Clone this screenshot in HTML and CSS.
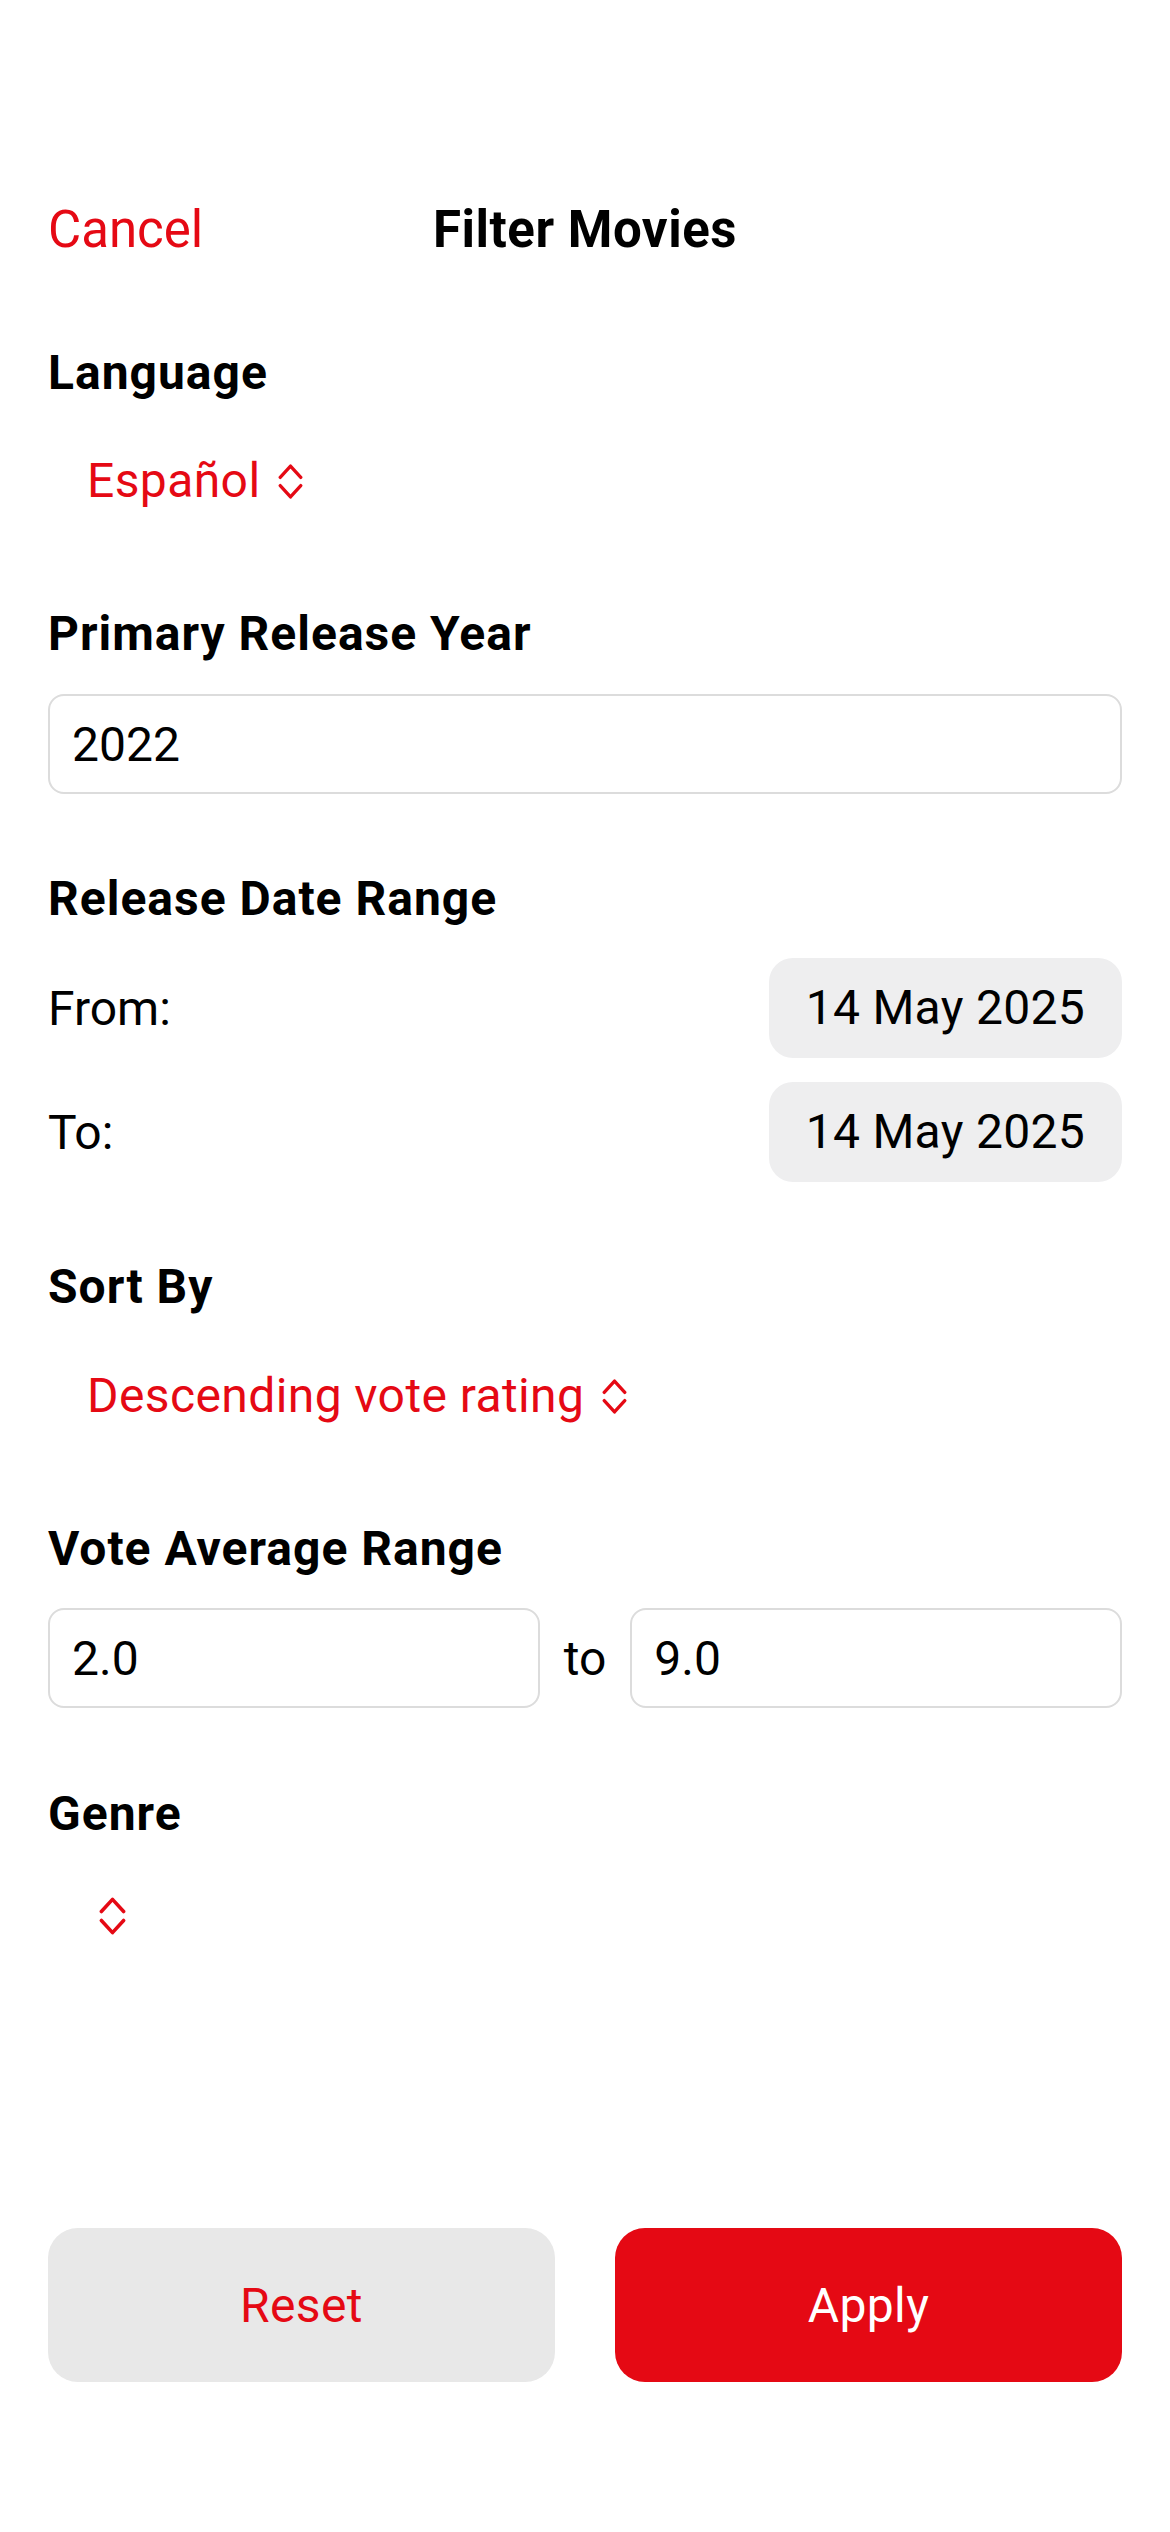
FILE: index.html
```html
<!DOCTYPE html>
<html lang="en">
<head>
<meta charset="utf-8">
<title>Filter Movies</title>
<link rel="stylesheet" href="styles.css">
</head>
<body>
<div class="screen">
  <header class="nav">
    <span class="nav-cancel">Cancel</span>
    <span class="nav-title">Filter Movies</span>
    <span class="nav-spacer"></span>
  </header>

  <section class="section section-language">
    <div class="section-label">Language</div>
    <div class="picker picker-language">
      <span class="picker-text">Español</span>
      <svg class="chevrons" viewBox="0 0 24 36" aria-hidden="true"><polyline points="2,14 12,3 22,14"/><polyline points="2,22 12,33 22,22"/></svg>
    </div>
  </section>

  <section class="section section-year">
    <div class="section-label">Primary Release Year</div>
    <input class="field field-year" type="text" value="2022">
  </section>

  <section class="section section-dates">
    <div class="section-label">Release Date Range</div>
    <div class="date-row date-row-from">
      <span class="date-label">From:</span>
      <span class="date-pill">14 May 2025</span>
    </div>
    <div class="date-row date-row-to">
      <span class="date-label">To:</span>
      <span class="date-pill">14 May 2025</span>
    </div>
  </section>

  <section class="section section-sort">
    <div class="section-label">Sort By</div>
    <div class="picker picker-sort">
      <span class="picker-text">Descending vote rating</span>
      <svg class="chevrons" viewBox="0 0 24 36" aria-hidden="true"><polyline points="2,14 12,3 22,14"/><polyline points="2,22 12,33 22,22"/></svg>
    </div>
  </section>

  <section class="section section-vote">
    <div class="section-label">Vote Average Range</div>
    <div class="range-row">
      <input class="field field-range" type="text" value="2.0">
      <span class="range-to">to</span>
      <input class="field field-range" type="text" value="9.0">
    </div>
  </section>

  <section class="section section-genre">
    <div class="section-label">Genre</div>
    <div class="picker picker-genre">
      <svg class="chevrons chevrons-genre" viewBox="0 0 24 36" aria-hidden="true"><polyline points="2,14 12,3 22,14"/><polyline points="2,22 12,33 22,22"/></svg>
    </div>
  </section>

  <div class="actions">
    <button class="btn btn-reset" type="button">Reset</button>
    <button class="btn btn-apply" type="button">Apply</button>
  </div>
</div>
</body>
</html>
```

FILE: styles.css
```css
* {
  box-sizing: border-box;
}

html, body {
  margin: 0;
  padding: 0;
  background: #ffffff;
}

body {
  font-family: Roboto, "Liberation Sans", Arial, sans-serif;
  font-size: 48px;
  color: #000000;
}

.screen {
  width: 1170px;
  min-height: 2532px;
  padding: 200px 48px 0 48px;
}

/* Navigation bar */
.nav {
  display: grid;
  grid-template-columns: 1fr auto 1fr;
  align-items: baseline;
  height: 60px;
  line-height: 60px;
}

.nav-cancel {
  color: #e50914;
  font-size: 51px;
  justify-self: start;
}

.nav-title {
  font-size: 51px;
  font-weight: 700;
  letter-spacing: 0.5px;
}

/* Sections */
.section-label {
  font-size: 48px;
  font-weight: 700;
  line-height: 60px;
  height: 60px;
  letter-spacing: 1px;
}

.section-language { margin-top: 83px; }
.section-year     { margin-top: 93px; }
.section-dates    { margin-top: 75px; }
.section-sort     { margin-top: 75px; }
.section-vote     { margin-top: 93px; }
.section-genre    { margin-top: 76px; }

/* Menu pickers */
.picker {
  display: flex;
  align-items: center;
  gap: 18px;
  height: 60px;
  line-height: 60px;
  padding-left: 39px;
  color: #e50914;
}

.picker-text {
  letter-spacing: 0.4px;
}

.picker-language { margin-top: 48px; }
.picker-sort     { margin-top: 49px; }
.picker-genre    { margin-top: 42px; padding-left: 51px; }

.chevrons {
  width: 25px;
  height: 37px;
  fill: none;
  stroke: #e50914;
  stroke-width: 3.2;
  stroke-linecap: round;
  stroke-linejoin: round;
}

.chevrons-genre {
  width: 27px;
  height: 40px;
}

/* Text fields */
.field {
  display: block;
  height: 100px;
  margin: 0;
  padding: 0 22px;
  border: 2px solid #dcdcdc;
  border-radius: 16px;
  background: #ffffff;
  font-family: Roboto, "Liberation Sans", Arial, sans-serif;
  font-size: 48px;
  color: #000000;
  outline: none;
}

.field-year {
  width: 100%;
  margin-top: 30px;
}

/* Date rows */
.date-row {
  display: flex;
  justify-content: space-between;
  align-items: center;
}

.date-row-from { margin-top: 29px; }
.date-row-to   { margin-top: 24px; }

.date-label {
  font-size: 48px;
}

.date-pill {
  height: 100px;
  line-height: 100px;
  padding: 0 37px;
  border-radius: 24px;
  background: #eeeeef;
  font-size: 48px;
  letter-spacing: 0.3px;
}

/* Vote range */
.range-row {
  display: flex;
  align-items: center;
  gap: 24px;
  margin-top: 29px;
}

.field-range {
  flex: 1 1 0;
  min-width: 0;
  width: 0;
}

.range-to {
  font-size: 48px;
}

/* Bottom actions */
.actions {
  display: flex;
  gap: 60px;
  margin-top: 282px;
}

.btn {
  flex: 1 1 0;
  height: 154px;
  border: none;
  border-radius: 30px;
  font-family: Roboto, "Liberation Sans", Arial, sans-serif;
  font-size: 48px;
  letter-spacing: 0.4px;
  cursor: pointer;
}

.btn-reset {
  background: #e8e8e8;
  color: #e50914;
}

.btn-apply {
  background: #e50914;
  color: #ffffff;
}
```
